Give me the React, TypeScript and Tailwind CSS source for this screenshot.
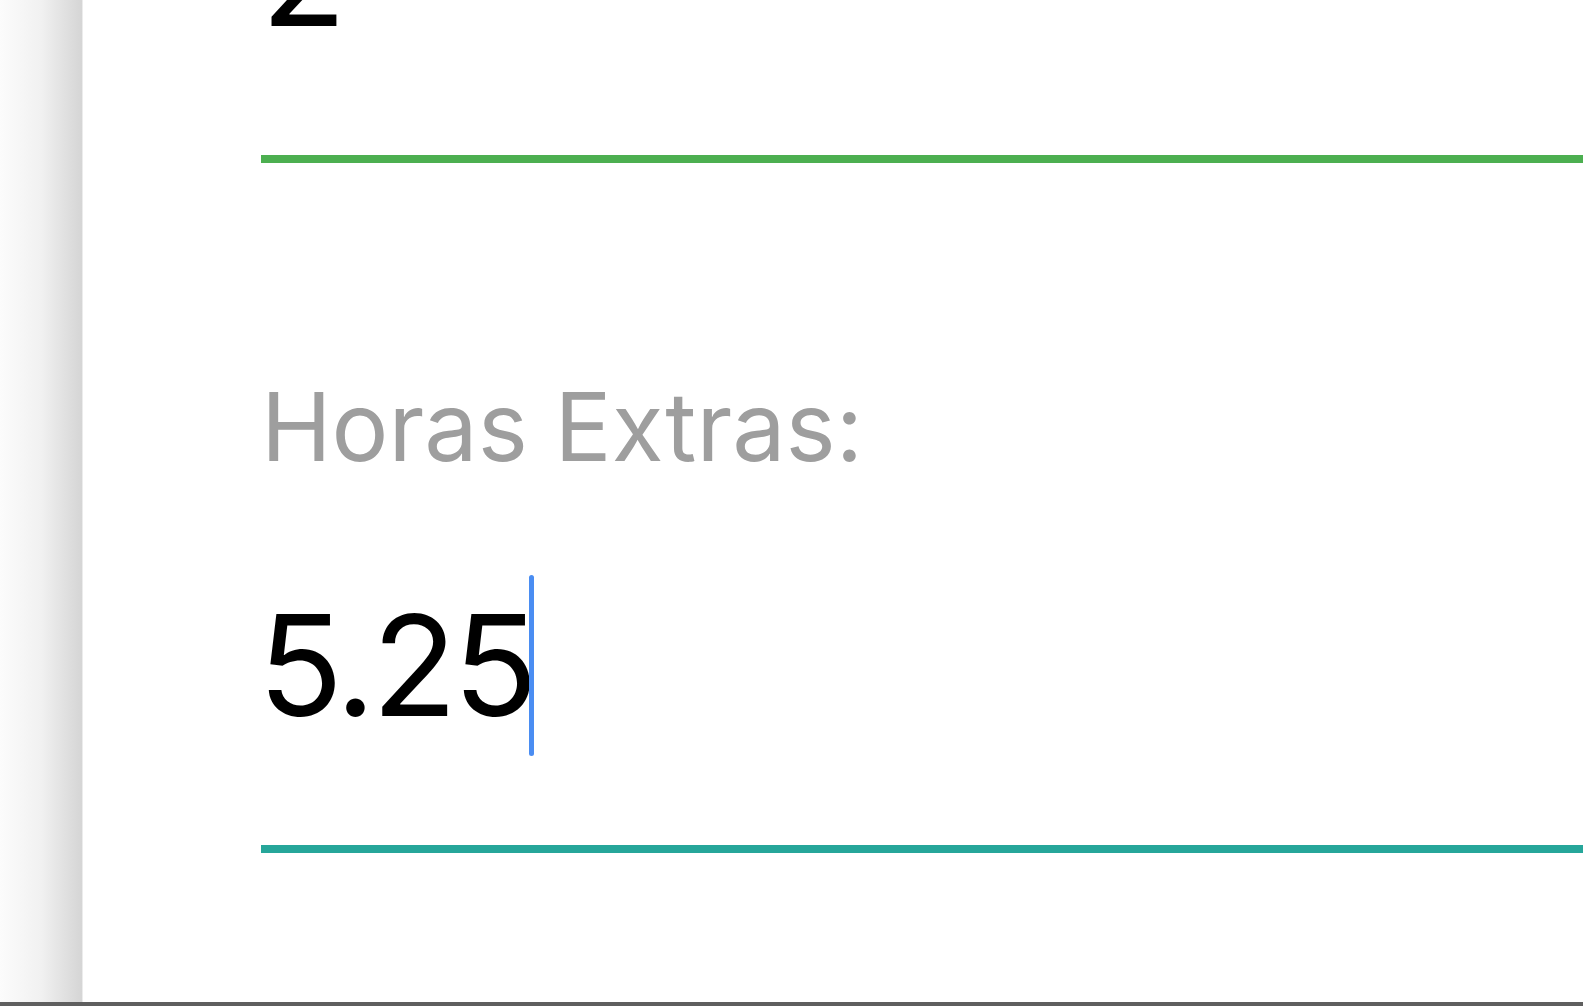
export default function App() {
  return (
    <div className="flex h-[1006px] w-full flex-col overflow-hidden bg-white font-['Inter',sans-serif]">
      <div className="flex min-h-0 flex-1">
        <div className="w-[83px] shrink-0 border-r border-[#ececec] bg-linear-to-r from-[#fcfcfc] via-[#f1f1f1] to-[#d5d5d5]" />
        <div className="flex min-w-0 flex-1 flex-col pl-[178px] -mt-[115px]">
          <div className="h-[181px] text-[140px] leading-[181px] tracking-[-3px] text-black">2</div>
          <div className="mt-[89px] h-[8px] w-full bg-[#4caf50]" />

          <label className="mt-[204px] h-[120px] text-[95px] leading-[120px] text-[#9e9e9e]">Horas Extras:</label>
          <div className="mt-[88px] flex h-[181px] items-start">
            <span className="-ml-[3px] text-[140px] leading-[181px] tracking-[-4px] text-black">5.25</span>
            <span className="-ml-[5px] h-[181px] w-[5px] shrink-0 rounded-full bg-[#4a8df2]" />
          </div>
          <div className="mt-[89px] h-[8px] w-full bg-[#26a69a]" />
        </div>
      </div>
      <div className="h-[4px] shrink-0 bg-[#5f5f5f]" />
    </div>
  );
}
